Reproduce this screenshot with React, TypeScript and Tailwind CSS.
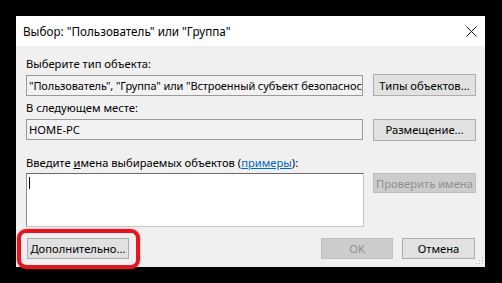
import React from "react";

function Btn({ children, w, h, disabled }: { children: React.ReactNode; w: string; h: string; disabled?: boolean }) {
  return (
    <div
      className={
        (disabled
          ? "bg-[#cccccc] border-[#bfbfbf] text-[#8f8f8f] "
          : "bg-[#e1e1e1] border-[#adadad] text-black ") +
        "border flex items-center justify-center shrink-0 whitespace-nowrap overflow-hidden " +
        w +
        " " +
        h
      }
    >
      {children}
    </div>
  );
}

export default function App() {
  return (
    <div className="w-[502px] h-[283px] bg-black pl-[16px] pt-[16px] font-['Noto_Sans',sans-serif] text-[11.2px] leading-[15px] text-black">
      <div className="relative w-[469px] h-[251px] bg-[#f0f0f0] flex flex-col overflow-visible">
        {/* title bar */}
        <div className="h-[30px] bg-white flex items-center justify-between pl-[7px] pr-[8px] shrink-0">
          <span className="text-[11.7px]">Выбор: "Пользователь" или "Группа"</span>
          <svg width="11" height="11" viewBox="0 0 11 11" className="mt-[1px]">
            <path d="M0.5 0.5 L10.5 10.5 M10.5 0.5 L0.5 10.5" stroke="#111" strokeWidth="1" />
          </svg>
        </div>

        {/* body */}
        <div className="flex flex-col pl-[10px] pr-[9px]">
          <div className="mt-[10px] h-[15px]">Выберите тип объекта:</div>
          <div className="mt-[3px] flex items-center gap-[10px] h-[22px]">
            <div className="w-[337px] h-[21px] border border-[#9a9a9a] bg-[#f2f2f2] pl-[2px] flex items-center overflow-hidden whitespace-nowrap text-[11px] tracking-[-0.1px]">
              "Пользователь", "Группа" или "Встроенный субъект безопаснос
            </div>
            <Btn w="w-[103px]" h="h-[22px]">Типы объектов...</Btn>
          </div>

          <div className="mt-[4px] h-[15px]">В следующем месте:</div>
          <div className="mt-[3px] flex items-center gap-[10px] h-[23px]">
            <div className="w-[337px] h-[21px] border border-[#9a9a9a] bg-[#f2f2f2] pl-[2px] flex items-center overflow-hidden whitespace-nowrap">
              HOME-PC
            </div>
            <Btn w="w-[103px]" h="h-[22px]">Размещение...</Btn>
          </div>

          <div className="mt-[14px] h-[15px]">
            Введите <span className="underline">и</span>мена выбираемых объектов (
            <span className="text-[#0066cc] underline">примеры</span>):
          </div>
          <div className="mt-[3px] flex items-start gap-[9px]">
            <div className="w-[338px] h-[54px] bg-white border border-[#c6c6c6] border-t-[#6a6a6a] border-l-[#8c8c8c] pl-[2px] pt-[3px]">
              <div className="w-px h-[12px] bg-black" />
            </div>
            <Btn w="w-[103px]" h="h-[20px]" disabled>
              Проверить имена
            </Btn>
          </div>

          <div className="mt-[11px] flex items-center justify-between pl-[1px] pr-[1px]">
            <div className="relative">
              <Btn w="w-[102px]" h="h-[21px]">Дополнительно...</Btn>
              <div className="absolute left-[-10px] top-[-9px] w-[123px] h-[40px] border-[4px] border-[#e5161d] rounded-[9px] shadow-[0_0_2px_rgba(229,22,29,0.6)]" />
            </div>
            <div className="flex items-center gap-[9px]">
              <Btn w="w-[72px]" h="h-[21px]" disabled>
                OK
              </Btn>
              <Btn w="w-[73px]" h="h-[21px]">Отмена</Btn>
            </div>
          </div>
        </div>

        {/* size grip */}
        <svg width="8" height="8" viewBox="0 0 8 8" className="absolute right-[1px] bottom-[2px]">
          <rect x="6" y="0" width="1" height="1" fill="#b5b5b5" />
          <rect x="3" y="3" width="1" height="1" fill="#b5b5b5" />
          <rect x="6" y="3" width="1" height="1" fill="#b5b5b5" />
          <rect x="0" y="6" width="1" height="1" fill="#b5b5b5" />
          <rect x="3" y="6" width="1" height="1" fill="#b5b5b5" />
          <rect x="6" y="6" width="1" height="1" fill="#b5b5b5" />
        </svg>
      </div>
    </div>
  );
}
